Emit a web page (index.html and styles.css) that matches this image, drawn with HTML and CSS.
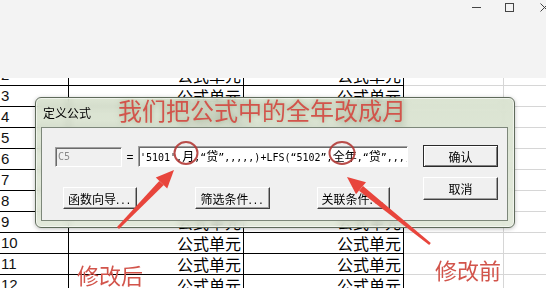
FILE: index.html
```html
<!DOCTYPE html>
<html lang="zh">
<head>
  <meta charset="UTF-8">
  <title>定义公式</title>
<link rel="stylesheet" href="styles.css">
</head>
<body>
  <div class="topbar">
    <div class="controls">
      <span class="ctl-min"></span>
      <span class="ctl-max"></span>
      <svg class="ctl-close" width="9" height="9" viewBox="0 0 9 9"><path d="M0.5 0.5 L8.5 8.5 M8.5 0.5 L0.5 8.5" stroke="#444" stroke-width="1"/></svg>
    </div>
  </div>

  <div class="sheet">
    <div class="rows">
      <div class="row"><div class="num">2</div><div class="val">公式单元</div><div class="val">公式单元</div><div class="gd"></div><div class="ge"></div></div>
      <div class="row"><div class="num">3</div><div class="val">公式单元</div><div class="val">公式单元</div><div class="gd"></div><div class="ge"></div></div>
      <div class="row"><div class="num">4</div><div class="val">公式单元</div><div class="val">公式单元</div><div class="gd"></div><div class="ge"></div></div>
      <div class="row"><div class="num">5</div><div class="val">公式单元</div><div class="val">公式单元</div><div class="gd"></div><div class="ge"></div></div>
      <div class="row"><div class="num">6</div><div class="val">公式单元</div><div class="val">公式单元</div><div class="gd"></div><div class="ge"></div></div>
      <div class="row"><div class="num">7</div><div class="val">公式单元</div><div class="val">公式单元</div><div class="gd"></div><div class="ge"></div></div>
      <div class="row"><div class="num">8</div><div class="val">公式单元</div><div class="val">公式单元</div><div class="gd"></div><div class="ge"></div></div>
      <div class="row"><div class="num">9</div><div class="val">公式单元</div><div class="val">公式单元</div><div class="gd"></div><div class="ge"></div></div>
      <div class="row"><div class="num">10</div><div class="val">公式单元</div><div class="val">公式单元</div><div class="gd"></div><div class="ge"></div></div>
      <div class="row"><div class="num">11</div><div class="val">公式单元</div><div class="val">公式单元</div><div class="gd"></div><div class="ge"></div></div>
      <div class="row"><div class="num">12</div><div class="val">公式单元</div><div class="val">公式单元</div><div class="gd"></div><div class="ge"></div></div>
    </div>
  </div>

  <div class="dialog">
    <div class="dlg-title">定义公式</div>
    <div class="client">
      <div class="left-col">
        <div class="field-row">
          <div class="field cell-ref">C5</div>
          <span class="eq">=</span>
          <div class="field formula">'5101',<span class="cjk">月</span>,“<span class="cjk">贷</span>”,,,,,)+LFS(“5102”,<span class="cjk">全年</span>,“<span class="cjk">贷</span>”,,,,</div>
        </div>
        <div class="btn-row">
          <button class="btn fx-wizard">函数向导<span class="dots">...</span></button>
          <button class="btn fx-filter">筛选条件<span class="dots">...</span></button>
          <button class="btn fx-link">关联条件<span class="dots">...</span></button>
        </div>
      </div>
      <div class="right-col">
        <button class="btn btn-ok">确认</button>
        <button class="btn btn-cancel">取消</button>
      </div>
    </div>
  </div>

  <svg class="marks" width="546" height="288" viewBox="0 0 546 288">
    <ellipse cx="186" cy="153" rx="11.5" ry="11" fill="none" stroke="#b23a36" stroke-width="2" opacity="0.9"/>
    <ellipse cx="342" cy="153" rx="12.5" ry="11" fill="none" stroke="#b23a36" stroke-width="2" opacity="0.9"/>
    <!-- arrow to 月 -->
    <polygon points="119,229 117,227 159.2,180.9 163.8,185.1" fill="#e8453c"/>
    <polygon points="174,170 167.2,188.6 155.8,177.6" fill="#e8453c"/>
    <!-- arrow to 全年 -->
    <polygon points="430.8,243 429.2,245 359,190.8 363,186" fill="#e8453c"/>
    <polygon points="347,177 366,182.3 356,194.3" fill="#e8453c"/>
  </svg>

  <div class="note note-top">我们把公式中的全年改成月</div>
  <div class="note note-after">修改后</div>
  <div class="note note-before">修改前</div>
</body>
</html>
```
FILE: styles.css
```css
* { box-sizing: border-box; }
body { margin: 0; width: 546px; height: 288px; overflow: hidden; background: #fff; position: relative; font-family: "Noto Sans CJK SC", sans-serif; color: #000; }

.topbar { height: 78px; background: #f3f3f3; display: flex; justify-content: flex-end; align-items: flex-start; }
.controls { display: flex; align-items: center; height: 9px; margin-top: 3px; margin-right: -3px; }
.ctl-min { width: 9px; height: 1px; background: #444; margin-right: 24px; }
.ctl-max { width: 9px; height: 9px; border: 1px solid #444; margin-right: 26px; }
.ctl-close { display: block; }

.sheet { height: 210px; overflow: hidden; }
.rows { margin-top: -13px; }
.row { display: grid; grid-template-columns: 69px 175px 160px 100px 1fr; height: 21px; }
.row > div { border-bottom: 1px solid #000; border-right: 1px solid #000; line-height: 20px; white-space: nowrap; }
.num { font: 15px "Liberation Sans", sans-serif; line-height: 20px; padding-left: 1px; color: #111; }
.val { text-align: right; padding-right: 2px; font-size: 16px; }
.row .gd { border-color: #d6d6d6; }
.row .ge { border-bottom-color: #d6d6d6; border-right: none; }

.dialog { position: absolute; left: 35px; top: 97px; width: 480px; height: 131px; border: 1px solid #5f6b5b; border-radius: 6px; padding: 0 6px 6px 5px; display: flex; flex-direction: column; background: linear-gradient(180deg, rgba(210,221,199,0.8), rgba(220,228,211,0.82)); backdrop-filter: blur(3px); box-shadow: inset 0 0 0 1px rgba(255,255,255,0.55), 0 1px 4px rgba(0,0,0,0.25); }
.dlg-title { height: 29px; line-height: 29px; font-size: 12px; padding-left: 2px; }
.client { flex: 1; display: flex; background: #f0f0f0; border: 1px solid #7d877a; padding: 17px 0 0 13px; }

.left-col { width: 353px; margin-top: 1px; }
.field-row { display: flex; align-items: center; height: 21px; }
.field { height: 20px; border: 1px solid; border-color: #a0a0a0 #fff #fff #a0a0a0; box-shadow: inset 1px 1px #6a6a6a; line-height: 18px; padding-left: 2px; white-space: nowrap; overflow: hidden; }
.cell-ref { width: 67px; background: #f0f0f0; color: #8a8a8a; font: 10px "DejaVu Sans Mono", monospace; line-height: 18px; }
.eq { width: 16px; text-align: center; font: 12px "Liberation Sans", sans-serif; }
.formula { width: 270px; height: 21px; background: #fff; font: 10px "DejaVu Sans Mono", "Noto Sans CJK SC", monospace; line-height: 19px; text-indent: -1px; }
.formula .cjk { font: 12px "Noto Sans CJK SC", sans-serif; }

.btn-row { display: flex; margin-top: 20px; padding-left: 8px; }
.btn { height: 22px; padding: 0; background: #f0f0f0; border: 1px solid; border-color: #fff #404040 #404040 #fff; box-shadow: inset -1px -1px #a0a0a0; font: 12px "Noto Sans CJK SC", sans-serif; color: #000; }
.dots { letter-spacing: 2px; font-family: "Liberation Sans", sans-serif; }
.fx-wizard { width: 74px; }
.fx-filter { width: 75px; margin-left: 58px; }
.fx-link { width: 73px; margin-left: 47px; }

.right-col { display: flex; flex-direction: column; margin-left: 15px; }
.btn-ok { width: 75px; height: 22px; border: 1px solid #2a2a2a; box-shadow: inset 1px 1px #fff, inset -1px -1px #808080; }
.btn-cancel { width: 75px; height: 23px; margin-top: 10px; }

.marks { position: absolute; left: 0; top: 0; pointer-events: none; }

.note { position: absolute; color: #d2544b; white-space: nowrap; line-height: 1; }
.note-top { left: 118px; top: 98px; font-size: 24px; text-shadow: 0 0 5px rgba(150,170,130,0.7); }
.note-after { left: 77px; top: 263px; font-size: 22px; }
.note-before { left: 435px; top: 258px; font-size: 22px; }
```
